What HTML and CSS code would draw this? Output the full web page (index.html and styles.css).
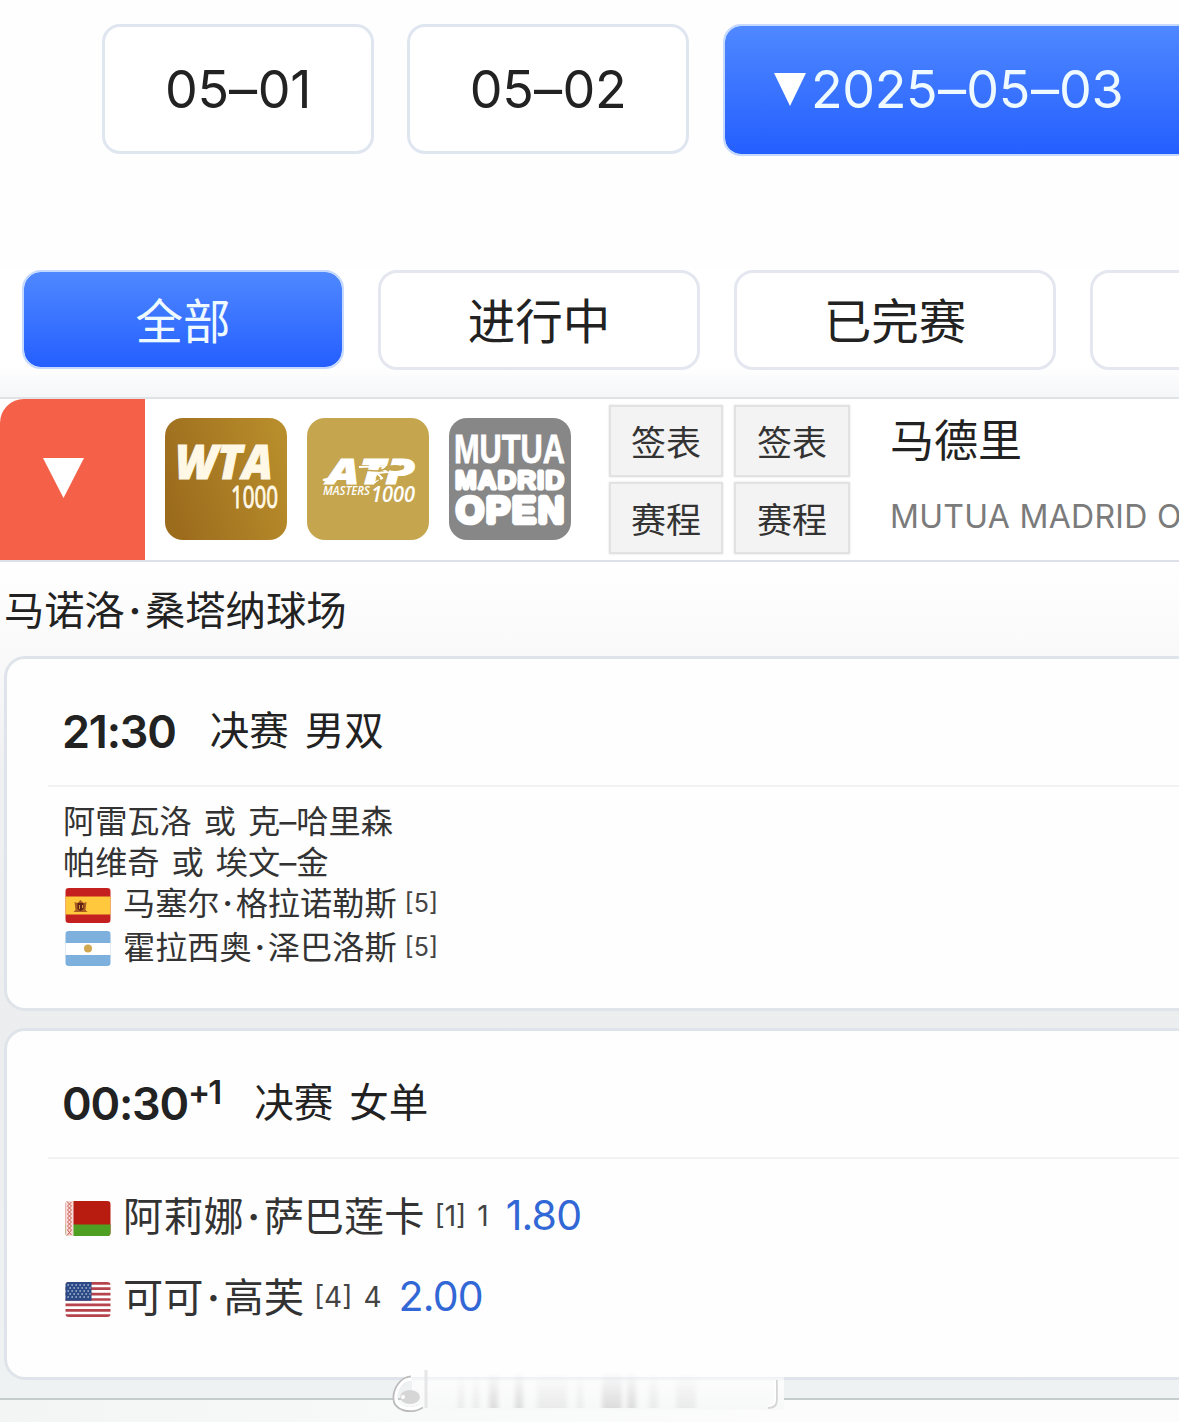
FILE: index.html
```html
<!DOCTYPE html>
<html lang="zh-CN">

<head>
    <meta charset="UTF-8">
    <meta name="viewport" content="width=device-width, initial-scale=1.0">
    <title>赛程</title>
    <link rel="stylesheet" href="styles.css">
</head>

<body>
    <div class="dates">
        <div class="date first">05<i class="dash">–</i>01</div>
        <div class="date second">05<i class="dash">–</i>02</div>
        <div class="date active">
            <svg class="arrow" width="32" height="33" viewBox="0 0 32 33"><path d="M0 0h32L16 33z" fill="#fff" /></svg>
            <span>2025<i class="dash">–</i>05<i class="dash">–</i>03</span>
        </div>
    </div>

    <div class="filters">
        <div class="filter active">全部</div>
        <div class="filter">进行中</div>
        <div class="filter">已完赛</div>
        <div class="filter"></div>
    </div>

    <div class="tournament">
        <div class="toggle">
            <svg width="41" height="40" viewBox="0 0 41 40"><path d="M0 0h41L20.500 40z" fill="#fff" /></svg>
        </div>
        <div class="logos">
            <svg class="logo" viewBox="0 0 122 122">
                <defs>
                    <linearGradient id="gold" x1="0" y1="0.600" x2="1" y2="0.300">
                        <stop offset="0" stop-color="#9c6c1d" />
                        <stop offset="1" stop-color="#b88d2b" />
                    </linearGradient>
                </defs>
                <rect width="122" height="122" rx="18" fill="url(#gold)" />
                <g fill="#fff8e6" font-family="Open Sans, sans-serif">
                    <text x="10" y="61" font-size="47" font-weight="800" font-style="italic" textLength="98" lengthAdjust="spacingAndGlyphs" stroke="#fff8e6">WTA</text>
                    <text x="66" y="90" font-size="31" textLength="47" lengthAdjust="spacingAndGlyphs" stroke="#fff8e6" stroke-width="1">1000</text>
                </g>
            </svg>
            <svg class="logo" viewBox="0 0 122 122">
                <rect width="122" height="122" rx="18" fill="#c5a54e" />
                <g fill="#fff" font-family="Open Sans, sans-serif" font-style="italic">
                    <text x="20" y="66" font-size="36" font-weight="800" textLength="88" lengthAdjust="spacingAndGlyphs" stroke="#fff">ATP</text>
                    <path d="M16 62l15-4-3 5zM52 49l26-1-3 3 5 3-10 1 5 5-9 6" stroke="#fff" fill="none" stroke-width="2" />
                    <path d="M54 52l16 1 9-2M67 67l6-5-4-3" stroke="#c5a54e" fill="none" stroke-width="1.500" />
                    <ellipse cx="88" cy="50" rx="9" ry="3" fill="#c5a54e" />
                    <text x="16" y="77" font-size="12" font-weight="600" textLength="47" lengthAdjust="spacingAndGlyphs">MASTERS</text>
                    <text x="64" y="84" font-size="21" font-weight="600" textLength="44" lengthAdjust="spacingAndGlyphs">1000</text>
                </g>
            </svg>
            <svg class="logo" viewBox="0 0 122 122">
                <rect width="122" height="122" rx="18" fill="#878787" />
                <g fill="#fff" stroke="#fff" font-family="Liberation Sans, sans-serif" font-weight="700">
                    <text x="5" y="45" font-size="40" textLength="111" lengthAdjust="spacingAndGlyphs" stroke-width="0.800">MUTUA</text>
                    <text x="6" y="71" font-size="26" textLength="109" lengthAdjust="spacing" stroke-width="3" stroke-linejoin="bevel">MADRID</text>
                    <text x="7" y="105" font-size="36" textLength="108" lengthAdjust="spacing" stroke-width="4.500" stroke-linejoin="bevel">OPEN</text>
                </g>
            </svg>
        </div>
        <div class="links">
            <div class="link">签表</div>
            <div class="link">签表</div>
            <div class="link">赛程</div>
            <div class="link">赛程</div>
        </div>
        <div class="info">
            <div class="city">马德里</div>
            <div class="full-name">MUTUA MADRID OPEN</div>
        </div>
    </div>

    <div class="court">
        <div class="court-name">马诺洛<i class="dot">·</i>桑塔纳球场</div>

        <div class="match doubles">
            <div class="match-head">
                <span class="time">21:30</span>
                <span class="round">决赛 男双</span>
            </div>
            <div class="players">
                <div class="player">阿雷瓦洛 或 克<i class="dash">–</i>哈里森</div>
                <div class="player">帕维奇 或 埃文<i class="dash">–</i>金</div>
                <div class="player with-flag">
                    <svg class="flag" viewBox="0 0 45 35">
                        <rect width="45" height="35" fill="#c3201f" />
                        <path d="M0 8.500h45v18H0z" fill="#ffc83d" />
                        <path d="M9 14l3 1 3-3 3 3 3-1-1 8 2 2H8l2-2z" fill="#a85a20" />
                        <path d="M12 15h6v6l-3 2-3-2z" fill="#5f2316" />
                        <path d="M14 17v4M17 17v3" stroke="#d99a33" />
                    </svg>
                    <span>马塞尔<i class="dot">·</i>格拉诺勒斯</span><small>[5]</small>
                </div>
                <div class="player with-flag last">
                    <svg class="flag" viewBox="0 0 45 35">
                        <rect width="45" height="35" fill="#7eb0dd" />
                        <path d="M0 12h45v12H0z" fill="#fff" />
                        <circle cx="22.500" cy="17.500" r="4" fill="#d2a750" />
                    </svg>
                    <span>霍拉西奥<i class="dot">·</i>泽巴洛斯</span><small>[5]</small>
                </div>
            </div>
        </div>

        <div class="match singles">
            <div class="match-head">
                <span class="time">00:30<sup>+1</sup></span>
                <span class="round">决赛 女单</span>
            </div>
            <div class="players">
                <div class="player with-flag">
                    <svg class="flag" viewBox="0 0 45 35">
                        <rect width="45" height="35" fill="#b81b10" />
                        <path d="M0 23.500h45V35H0z" fill="#4fa022" />
                        <path d="M0 0h8v35H0z" fill="#f5dcd8" />
                        <path d="M2 1l4 4-4 4 4 4-4 4 4 4-4 4 4 4-4 5M6 1L2 5l4 4-4 4 4 4-4 4 4 4-4 4 4 5" stroke="#cf5a51" fill="none" />
                    </svg>
                    <span>阿莉娜<i class="dot">·</i>萨巴莲卡</span><small>[1]</small><small class="rank">1</small><b class="odds">1.80</b>
                </div>
                <div class="player with-flag">
                    <svg class="flag" viewBox="0 0 45 35">
                        <rect width="45" height="35" fill="#fff" />
                        <path d="M0 1.300h45M0 6.700h45M0 12.100h45M0 17.500h45M0 22.900h45M0 28.300h45M0 33.700h45" stroke="#b5444d" stroke-width="2.700" />
                        <path d="M0 0h26v18.800H0z" fill="#2b4a86" />
                        <path d="M2 3h23M4 6h21M2 9h23M4 12h21M2 15h23" stroke="#c9d2e6" stroke-width="1.300" stroke-dasharray="1.300 2.700" />
                    </svg>
                    <span>可可<i class="dot">·</i>高芙</span><small>[4]</small><small class="rank">4</small><b class="odds">2.00</b>
                </div>
            </div>
        </div>
    </div>

    <div class="bottom-bar"></div>

    <svg class="smear" width="396" height="56" viewBox="0 0 396 56">
        <defs>
            <linearGradient id="fade" x1="0" y1="0" x2="0" y2="1">
                <stop offset="0" stop-color="#fff" stop-opacity="0" />
                <stop offset="0.350" stop-color="#fcfcfc" />
                <stop offset="1" stop-color="#f7f8f8" />
            </linearGradient>
            <linearGradient id="bars" x1="0" y1="0" x2="0" y2="1">
                <stop offset="0" stop-color="#dcdddc" stop-opacity="0" />
                <stop offset="1" stop-color="#dcdddc" />
            </linearGradient>
            <filter id="soft"><feGaussianBlur stdDeviation="2 0.300" /></filter>
        </defs>
        <path d="M22 4h372v40H22z" fill="url(#fade)" />
        <g fill="url(#bars)" filter="url(#soft)">
            <path d="M99 8h9v34h-9zM125 6h8v36h-8zM212 5h20v37h-20zM237 6h9v36h-9z" />
            <path d="M68 8h6v34h-6zM83 8h6v34h-6zM147 8h30v34h-30zM187 8h6v34h-6zM259 8h9v34h-9zM286 8h20v34h-20z" opacity="0.500" />
        </g>
        <path d="M36 4v38" stroke="#e6e6e6" stroke-width="3" />
        <path d="M32 40C20 47 5 43 5 32 5 22 12 13 21 12" stroke="#bbb" fill="none" stroke-width="5" />
        <path d="M32 39C21 46 6 42 6 32 6 22 13 13 22 13" stroke="#fff" fill="none" stroke-width="3.500" />
        <ellipse cx="20" cy="31" rx="10" ry="7" fill="#d6d6d6" />
        <circle cx="13" cy="31" r="2" fill="#fff" />
        <path d="M386 14v20q0 8-8 7" stroke="#d5d5d5" fill="none" stroke-width="3.500" />
        <path d="M385 14v20q0 6-7 6" stroke="#fff" fill="none" stroke-width="2" />
    </svg>
</body>

</html>
```

FILE: styles.css
```css
* {
    box-sizing: border-box;
}

body {
    margin: 0;
    width: 1179px;
    height: 1422px;
    overflow: hidden;
    position: relative;
    background-color: #fefefe;
    color: #222;
    font-family: Inter, 'Noto Sans CJK SC', sans-serif;
    white-space: nowrap;
}

.dates {
    display: flex;
    height: 270px;
    padding: 24px 0 0 102px;
    overflow: hidden;
}

.date {
    display: flex;
    align-items: center;
    justify-content: center;
    flex: none;
    height: 130px;
    border: 3px solid #e0e6f0;
    border-radius: 18px;
    background-color: #fff;
    font-size: 52px;
    letter-spacing: -0.4px;
}

.dash {
    display: inline-block;
    font-style: normal;
    letter-spacing: 0;
    transform: scaleX(1.08);
    margin: 0 0.030em;
}

.first {
    width: 272px;
    margin-right: 33px;
}

.second {
    width: 282px;
    margin-right: 34px;
}

.date.active {
    width: 500px;
    height: 132px;
    justify-content: flex-start;
    padding: 0 0 2px 49px;
}

.active {
    color: #eefaff;
    border: 2px solid #c5d9ff;
    background: linear-gradient(#4f88ff, #245fff) padding-box;
}

.arrow {
    margin-right: 5px;
}

.filters {
    display: flex;
    gap: 34px;
    height: 127px;
    padding-left: 22px;
    overflow: hidden;
    background: linear-gradient(#fff 75%, #f5f6f8);
}

.filter {
    flex: none;
    width: 322px;
    height: 100px;
    border: 3px solid #e4e7ef;
    border-radius: 19px;
    background-color: #fff;
    font-size: 47.500px;
    line-height: 98px;
    text-align: center;
}

.filter.active {
    height: 99px;
    border: 2px solid #c5d9ff;
    background: linear-gradient(#4f88ff, #245fff) padding-box;
    line-height: 100px;
}

.tournament {
    display: flex;
    height: 165px;
    overflow: hidden;
    border-top: 2px solid #dfe2e7;
    border-bottom: 2px solid #dce1e7;
    background-color: #fff;
}

.toggle {
    flex: none;
    width: 145px;
    display: flex;
    align-items: center;
    justify-content: center;
    padding: 0 18px 4px 0;
    border-top-left-radius: 24px;
    background-color: #f46148;
}

.logos {
    flex: none;
    display: flex;
    gap: 20px;
    padding: 19px 0 0 20px;
}

.logo {
    display: block;
    width: 122px;
    height: 122px;
}

.links {
    flex: none;
    display: grid;
    grid-template-columns: 114px 116px;
    grid-template-rows: 72px 72px;
    gap: 5px 11px;
    padding: 6px 0 0 38px;
}

.link {
    border: 2px solid #e2e2e2;
    background-color: #f3f3f3;
    box-shadow: 0 0 2px #ddd;
    color: #333;
    font-size: 35px;
    line-height: 72px;
    text-align: center;
}

.info {
    flex: none;
    padding-left: 40px;
}

.city {
    height: 82px;
    font-size: 44px;
    line-height: 84px;
}

.full-name {
    color: #7b7b7b;
    font-size: 32px;
    line-height: 72px;
    letter-spacing: 0.3px;
}

.court {
    height: 836px;
    overflow: hidden;
    padding-left: 4px;
    background: linear-gradient(#fff, #faf9fa 11%, #eff0f2 25%, #ecedef 60%, #eff2f3);
}

.court-name {
    height: 94px;
    font-size: 40.300px;
    line-height: 97px;
}

.dot {
    display: inline-block;
    width: 0.5em;
    font-style: normal;
    font-weight: 600;
    text-align: center;
}

.match {
    width: 1200px;
    border: 3px solid #dfe4ea;
    border-radius: 21px;
    background-color: #fefefe;
}

.doubles {
    height: 355px;
    margin-bottom: 17px;
}

.singles {
    height: 352px;
}

.match-head {
    display: flex;
    align-items: center;
    height: 128px;
    margin-left: 41px;
    padding: 18px 0 0 14px;
    border-bottom: 2px solid #f1f2f4;
}

.time {
    font-size: 45px;
    font-weight: 600;
    letter-spacing: -1.2px;
}

.time sup {
    font-size: 33px;
    line-height: 0;
    vertical-align: 16px;
    letter-spacing: -2px;
}

.round {
    margin: -8px 0 0 34px;
    font-size: 39.500px;
    word-spacing: 5px;
}

.players {
    padding-left: 56px;
    color: #333;
}

.doubles .players {
    padding-top: 14px;
}

.player {
    height: 41px;
    font-size: 32.200px;
    line-height: 41px;
    word-spacing: 3px;
}

.doubles .dash {
    transform: scaleX(1.05);
    margin: 0;
}

.with-flag {
    display: flex;
    align-items: center;
}

.last {
    height: 46px;
}

.flag {
    width: 46px;
    height: 35px;
    margin: 3px 12px 0 2px;
    border-radius: 4px;
}

.player small {
    margin-left: 8px;
    font-size: 25px;
    color: #444;
}

.singles .player {
    height: 81px;
    font-size: 40.200px;
    line-height: 81px;
}

.singles .players {
    padding-top: 17px;
}

.singles small {
    margin-left: 10px;
    font-size: 28px;
}

.singles .rank {
    margin-left: 11px;
}

.player .odds {
    margin: -3px 0 0 17px;
    color: #3267d6;
    font-weight: 400;
    font-size: 41px;
    letter-spacing: -0.8px;
}

.bottom-bar {
    height: 24px;
    border-top: 2px solid #c5cccc;
    background: linear-gradient(90deg, #f3f5f5, #fcfcfc 65%);
}

/* faded strip over the bottom edge */
.smear {
    position: absolute;
    left: 390px;
    top: 1366px;
}
```
